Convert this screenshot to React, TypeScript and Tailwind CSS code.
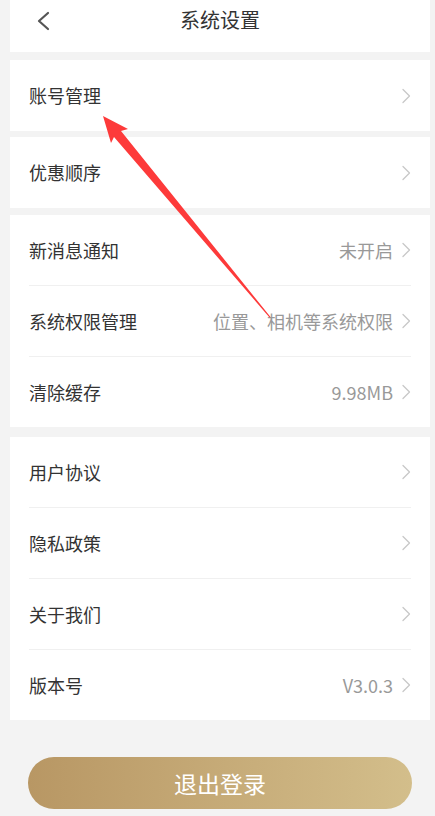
import React from "react";

type Item = { label: string; value?: string };

const groups: { items: Item[]; gap: string }[] = [
  { items: [{ label: "账号管理" }], gap: "mt-[8px]" },
  { items: [{ label: "优惠顺序" }], gap: "mt-[6px]" },
  {
    items: [
      { label: "新消息通知", value: "未开启" },
      { label: "系统权限管理", value: "位置、相机等系统权限" },
      { label: "清除缓存", value: "9.98MB" },
    ],
    gap: "mt-[7px]",
  },
  {
    items: [
      { label: "用户协议" },
      { label: "隐私政策" },
      { label: "关于我们" },
      { label: "版本号", value: "V3.0.3" },
    ],
    gap: "mt-[10px]",
  },
];

function Chevron(): React.ReactElement {
  return (
    <svg width="9" height="16" viewBox="0 0 9 16" fill="none">
      <path d="M1 1.5 L7.5 8 L1 14.5" stroke="#c8c8c8" strokeWidth="1.3" strokeLinecap="round" strokeLinejoin="round" />
    </svg>
  );
}

function Row({ item, single }: { item: Item; single: boolean }): React.ReactElement {
  return (
    <div className={`flex items-center justify-between ${single ? "h-[71px]" : "h-[70px]"}`}>
      <span className="text-[18px] text-[#333333]">{item.label}</span>
      <div className="flex items-center gap-[9px]">
        {item.value && <span className="text-[18px] text-[#999999]">{item.value}</span>}
        <Chevron />
      </div>
    </div>
  );
}

export default function App(): React.ReactElement {
  return (
    <div
      className="relative min-h-[816px] w-full bg-[#f3f3f3] pl-[10px] pr-[5px]"
      style={{ fontFamily: '"Noto Sans CJK SC", "Noto Sans", sans-serif' }}
    >
      <header className="relative flex h-[52px] items-start justify-center bg-white pt-[6px]">
        <svg className="absolute left-[26px] top-[11px]" width="14" height="20" viewBox="0 0 14 20" fill="none">
          <path d="M12 2 L3 10 L12 18" stroke="#555555" strokeWidth="2.2" strokeLinecap="round" strokeLinejoin="round" />
        </svg>
        <h1 className="text-[20px] leading-[28px] text-[#333333]">系统设置</h1>
      </header>

      {groups.map((group, gi) => (
        <section key={gi} className={`${group.gap} bg-white px-[19px]`}>
          {group.items.map((item, i) => (
            <div key={item.label}>
              {i > 0 && <div className="h-px bg-[#f0f0f0]" />}
              <Row item={item} single={group.items.length === 1} />
            </div>
          ))}
        </section>
      ))}

      <div className="mt-[37px] px-[18px] pb-[6px]">
        <button className="flex h-[52px] w-full items-center justify-center rounded-full bg-gradient-to-r from-[#b89764] to-[#d3be8b] text-[23px] text-white">
          退出登录
        </button>
      </div>

      <svg className="pointer-events-none absolute left-0 top-0" width="435" height="816" viewBox="0 0 435 816">
        <polygon
          points="103,116 128,129 121,131 270.5,317 269.5,317.5 114,137 111,143"
          fill="#fd3a3a"
        />
      </svg>
    </div>
  );
}
